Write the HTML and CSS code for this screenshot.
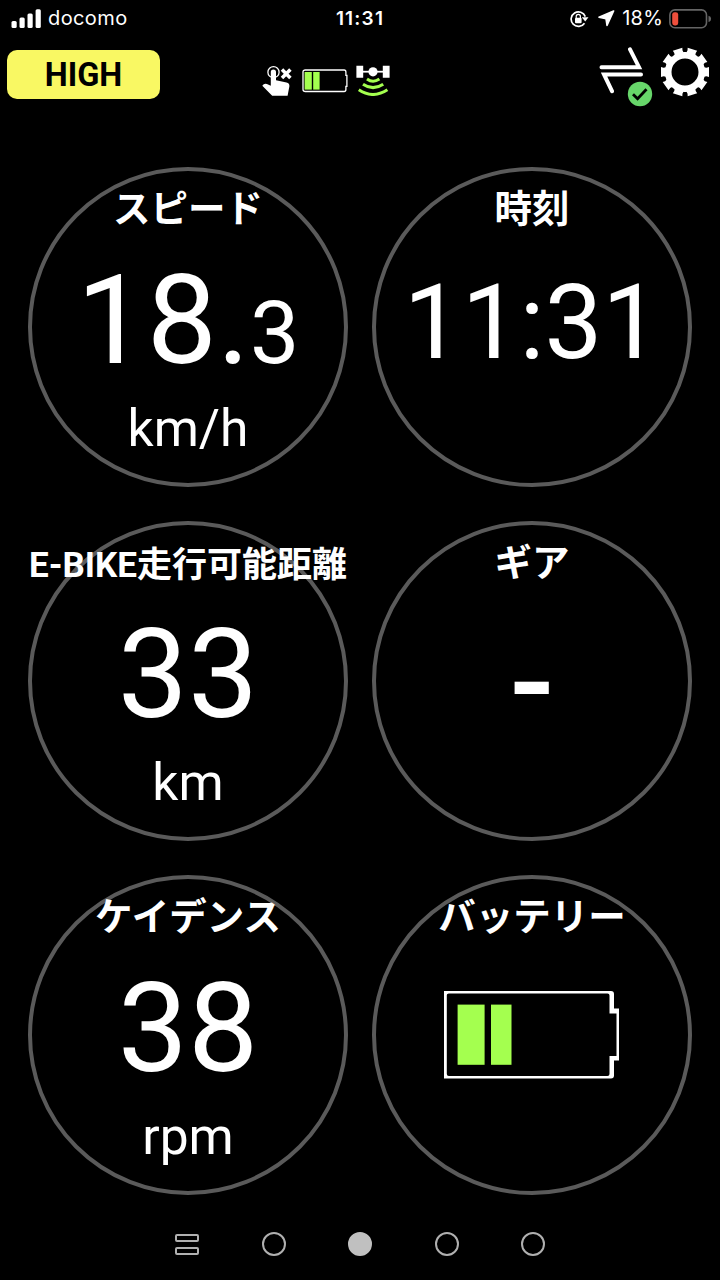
FILE: index.html
```
<!DOCTYPE html>
<html lang="ja">
<head>
    <meta charset="UTF-8">
    <meta name="viewport" content="width=device-width, initial-scale=1.0">
    <title>E-BIKE</title>
    <link rel="stylesheet" href="styles.css">
</head>
<body>
<div class="status">
    <div class="status-left">
        <svg width="30" height="20" viewBox="0 0 30 20" fill="#fff">
            <rect x="0.5" y="12" width="5.2" height="7" rx="1.5"/>
            <rect x="8.5" y="8.5" width="5.2" height="10.5" rx="1.5"/>
            <rect x="16.5" y="4.5" width="5.2" height="14.5" rx="1.5"/>
            <rect x="24.6" y="0.2" width="5.2" height="18.8" rx="1.5"/>
        </svg>
        <span class="carrier">docomo</span>
    </div>
    <div class="clock">11:31</div>
    <div class="status-right">
        <svg class="lock" width="19" height="18" viewBox="0 0 19 18">
            <path d="M15.3 6.600A7.3 7.3 0 1 0 14.5 13.2" fill="none" stroke="#fff" stroke-width="1.7"/>
            <path d="M11.8 7.2h6.7l-3.3 4.2z" fill="#fff"/>
            <rect x="5" y="7.8" width="6.6" height="5.4" rx="1" fill="#fff"/>
            <path d="M6.2 8V6.5a2.1 2.1 0 0 1 4.2 0V8" fill="none" stroke="#fff" stroke-width="1.2"/>
        </svg>
        <svg class="arrow" width="17" height="17" viewBox="0 0 17 17">
            <path d="M15.6 1 1 7.2l7 1.400 1 6.900z" fill="#fff" stroke="#fff" stroke-width="1.6" stroke-linejoin="round"/>
        </svg>
        <span class="percent">18%</span>
        <svg class="phone-battery" width="43" height="20" viewBox="0 0 43 20">
            <rect x="0.9" y="0.9" width="36.6" height="17.8" rx="5" fill="none" stroke="#656565" stroke-width="1.6"/>
            <path d="M39.5 6.7q3.6 1.1 2.2 4.6-.6 1.4-2.2 1.8z" fill="#656565"/>
            <rect x="3.2" y="3.2" width="6" height="13.2" rx="2.4" fill="#ee4f3c"/>
        </svg>
    </div>
</div>

<div class="header">
    <div class="mode">HIGH</div>
    <div class="icons">
        <svg width="31" height="32" viewBox="0 0 31 32">
            <circle cx="11.5" cy="7.2" r="5.6" fill="none" stroke="#fff" stroke-width="1.3"/>
            <path d="M8.8 7a2.6 2.6 0 0 1 5.2 0v8.3l10.5 2.3q3.2.8 2.9 3.7l-1.2 6.3-.6 3.2H10.2L0.3 20.8q1.7-2.8 4.6-1.8l3.9 1.8z" fill="#fff"/>
            <path d="M20 4.500l8.400 8.400M28.400 4.500l-8.400 8.400" stroke="#fff" stroke-width="3.5"/>
        </svg>
        <svg width="46" height="24" viewBox="0 0 46 24">
            <path d="M3.3 1h38.8q1.8 0 1.8 2v3.4h1v10.9h-1v3.2q0 2-1.8 2H3.3Q1 22.5 1 20.5V3q0-2 2.3-2z" fill="none" stroke="#fff" stroke-width="1.3"/>
            <rect x="2.6" y="3" width="7.2" height="17.6" fill="#a4ff4f"/>
            <rect x="11.2" y="3" width="6.4" height="17.6" fill="#a4ff4f"/>
        </svg>
        <svg width="34" height="31" viewBox="0 0 34 31">
            <path d="M.4.7h6.8v12H.4zM26.8.7h6.8v12h-6.8z" fill="#fff"/>
            <path d="M7 6.7h20" stroke="#fff" stroke-width="1.8"/>
            <circle cx="17" cy="6.8" r="4.600" fill="#fff"/>
            <g fill="none" stroke="#a4ff4f" stroke-width="3">
                <path d="M11 14q6 4.400 12.400 0"/>
                <path d="M7 19.200q10 6.800 20.200 0"/>
                <path d="M2.800 24.800q14 9.400 28.600 0"/>
            </g>
        </svg>
    </div>
    <div class="tools">
        <div class="sync">
            <svg width="46" height="48" viewBox="0 0 46 48">
                <path d="M2.5 20.2H40L31 2.300M42 27.400H5L13 44.200" fill="none" stroke="#fff" stroke-width="4" stroke-linecap="round"/>
            </svg>
            <svg class="check" width="26" height="26" viewBox="0 0 26 26">
                <circle cx="13" cy="13" r="12.2" fill="#67d66a"/>
                <path d="M6 13.200l4.600 4.500 8.900-9.400" fill="none" stroke="#000" stroke-width="2.8"/>
            </svg>
        </div>
        <svg width="50" height="50" viewBox="-25 -25 50 50">
            <defs><path id="tooth" d="M-4.900-17.500L-4.300-21.500-5-24h10L4.300-21.500 4.900-17.500z"/></defs>
            <circle r="16.8" fill="none" stroke="#fff" stroke-width="6.6"/>
            <g fill="#fff">
                <use href="#tooth" transform="rotate(18)"/>
                <use href="#tooth" transform="rotate(54)"/>
                <use href="#tooth" transform="rotate(90)"/>
                <use href="#tooth" transform="rotate(126)"/>
                <use href="#tooth" transform="rotate(162)"/>
                <use href="#tooth" transform="rotate(198)"/>
                <use href="#tooth" transform="rotate(234)"/>
                <use href="#tooth" transform="rotate(270)"/>
                <use href="#tooth" transform="rotate(306)"/>
                <use href="#tooth" transform="rotate(342)"/>
            </g>
        </svg>
    </div>
</div>

<div class="gauges">
    <div class="gauge">
        <div class="label">スピード</div>
        <div class="value">18.<span class="decimal">3</span></div>
        <div class="unit">km/h</div>
    </div>
    <div class="gauge">
        <div class="label">時刻</div>
        <div class="value time">11:31</div>
    </div>
    <div class="gauge">
        <div class="label long">E-BIKE走行可能距離</div>
        <div class="value">33</div>
        <div class="unit">km</div>
    </div>
    <div class="gauge">
        <div class="label">ギア</div>
        <div class="value gear">-</div>
    </div>
    <div class="gauge">
        <div class="label">ケイデンス</div>
        <div class="value">38</div>
        <div class="unit">rpm</div>
    </div>
    <div class="gauge">
        <div class="label">バッテリー</div>
        <svg class="battery" width="176" height="88" viewBox="0 0 176 88">
            <path d="M0 0H167Q170 0 170 3V17.5H175V69.5H170V84.5Q170 87.5 167 87.5H0zM2.8 4V83Q2.8 85 4.8 85H163.5Q165.5 85 165.5 83V65H172.5V22.5H165.5V4.5Q165.5 2.5 163.5 2.5H4.8Q2.8 2.5 2.8 4z" fill="#fff" fill-rule="evenodd"/>
            <rect x="13.6" y="13.6" width="27" height="60.2" fill="#a4ff4f"/>
            <rect x="47" y="13.6" width="20.5" height="60.2" fill="#a4ff4f"/>
        </svg>
    </div>
</div>

<div class="pager">
    <div class="list"><span></span><span></span></div>
    <div class="dot"></div>
    <div class="dot active"></div>
    <div class="dot"></div>
    <div class="dot"></div>
</div>
</body>
</html>
```
FILE: styles.css
```
* {box-sizing: border-box;}
body {margin: 0; width: 720px; height: 1280px; overflow: hidden; background-color: #000; color: #fff; font-family: Roboto, "Noto Sans CJK JP", sans-serif;}
svg {display: block; flex: none;}

.status {display: grid; grid-template-columns: 1fr auto 1fr; align-items: center; height: 36px; padding: 0 8px 0 11px; font-family: Inter, sans-serif;}
.status-left {display: flex; align-items: center; gap: 7px;}
.carrier {font-size: 20px; letter-spacing: 0.4px; line-height: 37px;}
.clock {font-size: 19px; font-weight: 600; letter-spacing: 1.2px; margin-right: 3px;}
.status-right {display: flex; align-items: center; justify-content: flex-end;}
.arrow {margin: 0 7px 0 9px;}
.percent {font-size: 20px; line-height: 37px; letter-spacing: 0.2px;}
.phone-battery {margin-left: 6px;}

.header {display: grid; grid-template-columns: 153px auto 1fr; height: 131px; padding: 11px 10px 0 7px;}
.mode {height: 49px; margin-top: 3px; border-radius: 10px; background-color: #f9f863; color: #000; font-size: 32.5px; font-weight: 700; line-height: 50px; text-align: center;}
.icons {display: flex; align-items: center; gap: 8.5px; height: 67px; margin-left: 102px;}
.tools {display: flex; justify-content: flex-end; gap: 15px;}
.sync {position: relative;}
.check {position: absolute; left: 28px; top: 34px;}

.gauges {display: grid; grid-template-columns: 320px 320px; justify-content: center; gap: 34px 24px;}
.gauge {height: 320px; padding-top: 16px; border: 4px solid #5a5a5a; border-radius: 50%; display: flex; flex-direction: column; align-items: center; white-space: nowrap;}
.label {height: 48px; font-size: 37.5px; font-weight: 700; line-height: 45px;}
.long {font-size: 35px; line-height: 49px;}
.value {margin-top: 21px; font-size: 125px; line-height: 130px;}
.decimal {font-size: 88px; line-height: 1;}
.time {margin-top: 23px; font-size: 103px;}
.gear {margin-top: 29px; font-weight: 500; font-size: 132px;}
.unit {margin-top: 12px; font-size: 51.5px; line-height: 61px;}
.battery {margin-top: 48px;}

.pager {display: flex; justify-content: center; align-items: center; gap: 62.5px; height: 98px;}
.dot {width: 24px; height: 24px; border: 2px solid #b0b0b0; border-radius: 50%;}
.active {background-color: #c0c0c0; border-color: #c0c0c0;}
.list {display: flex; flex-direction: column; gap: 5px; width: 24px;}
.list span {height: 8px; border: 2px solid #b0b0b0; border-radius: 2px;}
```
